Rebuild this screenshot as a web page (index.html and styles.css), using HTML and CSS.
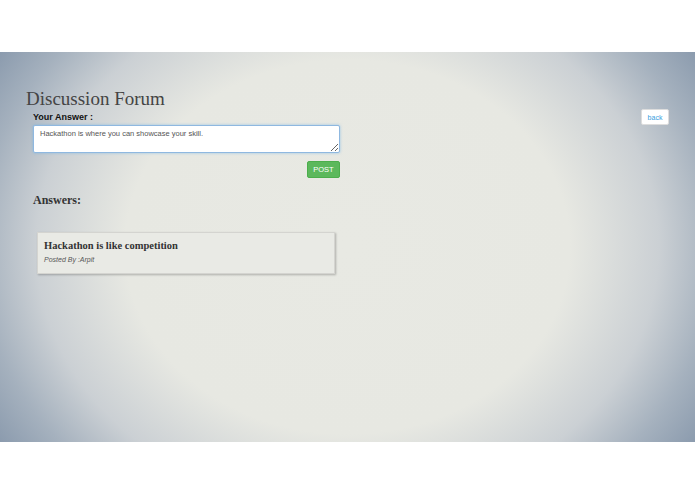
FILE: index.html
```html
<!DOCTYPE html>
<html lang="en">
<head>
  <meta charset="UTF-8" />
  <title>Discussion Forum</title>
  <link rel="stylesheet" href="styles.css">
</head>
<body>
  <div class="page">
    <div class="forum">
      <div class="main">
        <h1>Discussion Forum</h1>
        <label class="answer-label" for="answer">Your Answer :</label>
        <textarea id="answer" class="answer-box">Hackathon is where you can showcase your skill.</textarea>
        <div class="actions">
          <button class="post-btn">POST</button>
        </div>

        <h3 class="answers-title">Answers:</h3>

        <div class="answer-card">
          <h4>Hackathon is like competition</h4>
          <p class="posted-by">Posted By :Arpit</p>
        </div>
      </div>

      <div class="side">
        <button class="back-btn">back</button>
      </div>
    </div>
  </div>
</body>
</html>
```

FILE: styles.css
```css
body {
  margin: 0;
  padding: 0;
  background: #fff;
  font-family: 'Liberation Sans', Arial, sans-serif;
  color: #333;
}

.page {
  margin-top: 52px;
  height: 390px;
  background: radial-gradient(ellipse 64% 96% at 50% 50%, #e8e9e3 0%, #e7e8e2 50%, #cbd0d4 70%, #a5b1be 83%, #7d8fa5 100%);
}

.forum {
  display: flex;
  justify-content: space-between;
  padding: 0 26px 0 26px;
}

.main {
  width: 314px;
  padding-top: 35px;
}

h1 {
  margin: 0 0 2px 0;
  font-family: 'Liberation Serif', 'Times New Roman', serif;
  font-weight: normal;
  font-size: 19px;
  line-height: 23px;
  color: #444;
}

.answer-label {
  display: block;
  margin-left: 7px;
  font-size: 9px;
  font-weight: bold;
  color: #111;
  line-height: 11px;
}

.answer-box {
  display: block;
  box-sizing: border-box;
  margin: 2px 0 0 7px;
  width: 307px;
  height: 28px;
  padding: 3px 6px;
  border: 1px solid #8fb8e0;
  border-radius: 2px;
  box-shadow: 0 0 3px rgba(102, 175, 233, 0.6);
  font-family: 'Liberation Sans', Arial, sans-serif;
  font-size: 7.5px;
  color: #555;
  background: #fff;
  resize: vertical;
}

.actions {
  display: flex;
  justify-content: flex-end;
  margin-top: 8px;
}

.post-btn {
  width: 33px;
  height: 17px;
  padding: 0;
  background-color: #5cb85c;
  color: #fff;
  border: 1px solid #4cae4c;
  border-radius: 2px;
  font-family: 'Liberation Sans', Arial, sans-serif;
  font-size: 7.5px;
}

.answers-title {
  margin: 15px 0 0 7px;
  font-family: 'Liberation Serif', 'Times New Roman', serif;
  font-size: 12px;
  line-height: 14px;
  color: #333;
}

.answer-card {
  margin: 25px 0 0 11px;
  width: 298px;
  box-sizing: border-box;
  padding: 6px 6px 10px;
  border: 1px solid #d4d4d0;
  background: #e9eae5;
  box-shadow: 1px 1px 2px rgba(0, 0, 0, 0.25);
}

.answer-card h4 {
  margin: 0;
  font-family: 'Liberation Serif', 'Times New Roman', serif;
  font-size: 10.5px;
  line-height: 14px;
  color: #333;
}

.posted-by {
  margin: 3px 0 0;
  font-size: 7px;
  font-style: italic;
  color: #555;
}

.side {
  padding-top: 61px;
}

.back-btn {
  display: block;
  margin-top: -4px;
  width: 28px;
  height: 16px;
  padding: 0;
  background: #fff;
  border: 1px solid #ddd;
  border-radius: 2px;
  color: #3a9ee0;
  font-family: 'Liberation Sans', Arial, sans-serif;
  font-size: 7px;
}
```
